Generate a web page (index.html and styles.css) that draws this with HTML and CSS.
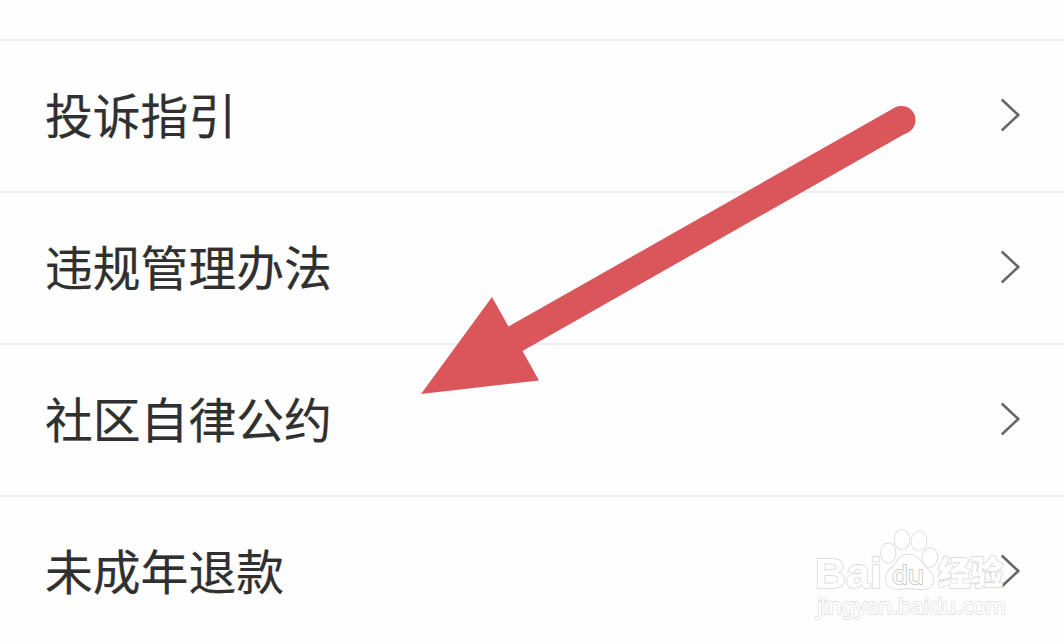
FILE: index.html
```html
<!DOCTYPE html>
<html lang="zh-CN">
<head>
<meta charset="utf-8">
<title>社区规则</title>
<link rel="stylesheet" href="styles.css">
</head>
<body>
<main class="screen">
  <ul class="list">
    <li class="row"><span class="label">投诉指引</span><svg class="chevron" viewBox="0 0 24 40"><path d="M3.700 3.500 20.300 19 3.700 34.500"/></svg></li>
    <li class="row"><span class="label">违规管理办法</span><svg class="chevron" viewBox="0 0 24 40"><path d="M3.700 3.500 20.300 19 3.700 34.500"/></svg></li>
    <li class="row"><span class="label">社区自律公约</span><svg class="chevron" viewBox="0 0 24 40"><path d="M3.700 3.500 20.300 19 3.700 34.500"/></svg></li>
    <li class="row"><span class="label">未成年退款</span><svg class="chevron" viewBox="0 0 24 40"><path d="M3.700 3.500 20.300 19 3.700 34.500"/></svg></li>
  </ul>
  <svg class="arrow" viewBox="0 0 1064 644">
    <path d="M421 394 492 297 508.500 326.500 894.500 107.800A14 14 0 0 1 909 131.500L522.500 351 539 380.500Z" />
    <circle cx="901.500" cy="120" r="14"/>
  </svg>
  <svg class="watermark" viewBox="800 515 240 120">
    <g class="mark">
      <text class="bai" x="815" y="588" textLength="67" lengthAdjust="spacingAndGlyphs">Bai</text>
      <ellipse cx="888.300" cy="553" rx="7.200" ry="9.500"/>
      <ellipse cx="902" cy="539.500" rx="7.300" ry="9.700"/>
      <ellipse cx="919" cy="541" rx="7.500" ry="9.500" transform="rotate(8 919 541)"/>
      <ellipse cx="929.800" cy="557.500" rx="7.500" ry="9.300" transform="rotate(8 929.800 557.500)"/>
      <path d="M908.500 554.500C900 554.500 898 562 892 567.500C886 573 885 575.500 886 581C888 589 895 589.500 902 588.500Q908.500 587.500 915 588.500C925 590.500 932 589 933 581C934 574 930 572 925 566.500C920 561 917 554.500 908.500 554.500Z"/>
      <text class="du" x="892" y="583.500" textLength="32" lengthAdjust="spacingAndGlyphs">du</text>
      <text class="cn" x="938" y="585" textLength="65" lengthAdjust="spacingAndGlyphs">经验</text>
      <text class="url" x="817" y="614" textLength="189" lengthAdjust="spacingAndGlyphs">jingyan.baidu.com</text>
    </g>
  </svg>
</main>
</body>
</html>
```
FILE: styles.css
```css
body {
  margin: 0;
  background: #fefefe;
  font-family: "Noto Sans CJK SC", sans-serif;
}

.screen {
  position: relative;
  width: 1064px;
  height: 644px;
  overflow: hidden;
}

.list {
  margin: 0;
  padding: 39px 0 0;
  list-style: none;
}

.row {
  display: flex;
  align-items: center;
  justify-content: space-between;
  box-sizing: border-box;
  height: 152px;
  padding: 0 42px 0 45px;
  border-top: 2px solid #eee;
}

.label {
  padding-bottom: 4px;
  color: #303030;
  font-size: 47.8px;
  line-height: 72px;
  -webkit-text-stroke: 0.2px #303030;
}

.chevron {
  width: 24px;
  height: 40px;
  fill: none;
  stroke: #686868;
  stroke-width: 2.6;
}

.arrow {
  position: absolute;
  inset: 0;
  width: 1064px;
  height: 644px;
  fill: #da565b;
}

.watermark {
  position: absolute;
  left: 800px;
  top: 515px;
  width: 240px;
  height: 120px;
}

.mark {
  fill: #fff;
  stroke: #dcdcdc;
  stroke-width: 1.8;
  stroke-linejoin: round;
  paint-order: stroke;
}

.bai {
  font: bold 43px "Liberation Sans", sans-serif;
}

.du {
  font: 26px "Noto Sans", sans-serif;
  stroke: #c8c8c8;
}

.cn {
  font: 900 33px "Noto Sans CJK SC", sans-serif;
}

.url {
  font: 22px "Noto Sans", sans-serif;
  stroke: #e2e2e2;
}
```
